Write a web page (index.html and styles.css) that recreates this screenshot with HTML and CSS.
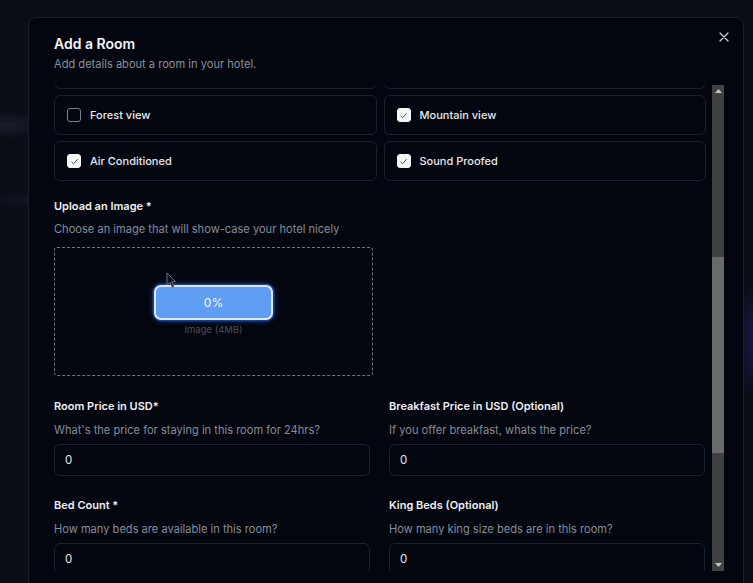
FILE: index.html
```html
<!DOCTYPE html>
<html lang="en">
<head>
<meta charset="utf-8">
<title>Add a Room</title>
<link rel="stylesheet" href="styles.css">
</head>
<body>
<div class="modal">
  <header class="head">
    <div class="head-text">
      <h2 class="title">Add a Room</h2>
      <p class="subtitle">Add details about a room in your hotel.</p>
    </div>
    <button class="close" aria-label="Close">
      <svg width="10" height="10" viewBox="0 0 10 10"><path d="M1 1L9 9M9 1L1 9" stroke="#c9cdd4" stroke-width="1.3" stroke-linecap="round"/></svg>
    </button>
  </header>
  <div class="scroll">
    <div class="scroll-content">
      <div class="amenities">
        <div class="card"></div>
        <div class="card"></div>
        <label class="card"><span class="box"></span><span class="card-label">Forest view</span></label>
        <label class="card"><span class="box checked"><svg width="9" height="9" viewBox="0 0 9 9"><path d="M1.5 4.8L3.6 6.8L7.6 2.2" fill="none" stroke="#4b5563" stroke-width="1"/></svg></span><span class="card-label">Mountain view</span></label>
        <label class="card"><span class="box checked"><svg width="9" height="9" viewBox="0 0 9 9"><path d="M1.5 4.8L3.6 6.8L7.6 2.2" fill="none" stroke="#4b5563" stroke-width="1"/></svg></span><span class="card-label">Air Conditioned</span></label>
        <label class="card"><span class="box checked"><svg width="9" height="9" viewBox="0 0 9 9"><path d="M1.5 4.8L3.6 6.8L7.6 2.2" fill="none" stroke="#4b5563" stroke-width="1"/></svg></span><span class="card-label">Sound Proofed</span></label>
      </div>

      <section class="upload">
        <div class="label">Upload an Image *</div>
        <div class="desc desc-upload">Choose an image that will show-case your hotel nicely</div>
        <div class="dropzone">
          <svg class="cursor" width="11" height="17" viewBox="0 0 11 17"><path d="M1 1L1 13L4 10.3L6.2 15.2L7.8 14.5L5.7 9.7L9.6 9.7Z" fill="#0b0f19" stroke="#6b7280" stroke-width="1" stroke-linejoin="round"/></svg>
          <div class="progress">0%</div>
          <div class="caption">Image (4MB)</div>
        </div>
      </section>

      <div class="fields">
        <div class="field">
          <div class="label">Room Price in USD*</div>
          <div class="desc">What's the price for staying in this room for 24hrs?</div>
          <div class="input">0</div>
        </div>
        <div class="field">
          <div class="label">Breakfast Price in USD (Optional)</div>
          <div class="desc">If you offer breakfast, whats the price?</div>
          <div class="input">0</div>
        </div>
        <div class="field">
          <div class="label">Bed Count *</div>
          <div class="desc">How many beds are available in this room?</div>
          <div class="input">0</div>
        </div>
        <div class="field">
          <div class="label">King Beds (Optional)</div>
          <div class="desc">How many king size beds are in this room?</div>
          <div class="input">0</div>
        </div>
      </div>
    </div>
    <div class="scrollbar">
      <div class="arrow"><svg width="7" height="4" viewBox="0 0 7 4"><path d="M0 4L3.5 0L7 4Z" fill="#c4c4c4"/></svg></div>
      <div class="track"><div class="thumb"></div></div>
      <div class="arrow"><svg width="7" height="4" viewBox="0 0 7 4"><path d="M0 0L3.5 4L7 0Z" fill="#c4c4c4"/></svg></div>
    </div>
  </div>
</div>
</body>
</html>
```

FILE: styles.css
```css
* { box-sizing: border-box; }

html, body {
  margin: 0;
  height: 100%;
  overflow: hidden;
}

body {
  font-family: Inter, "Liberation Sans", sans-serif;
  background:
    radial-gradient(ellipse 30px 60px at 760px 340px, rgba(28, 30, 90, 0.8), transparent),
    radial-gradient(ellipse 40px 14px at 10px 125px, rgba(40, 46, 60, 0.5), transparent),
    radial-gradient(ellipse 40px 10px at 30px 200px, rgba(30, 36, 50, 0.4), transparent),
    #0a0d16;
  padding: 17px 0 0 28px;
}

.modal {
  width: 716px;
  height: 620px;
  background: #03060f;
  border: 1px solid #1a1f2b;
  border-radius: 8px;
  padding: 16px 19px 0 25px;
}

.head {
  display: flex;
  justify-content: space-between;
  align-items: flex-start;
}

.title {
  margin: 0;
  font-size: 14px;
  line-height: 20px;
  font-weight: 600;
  color: #f3f4f6;
}

.subtitle {
  margin: 2px 0 0;
  font-size: 11.1px;
  line-height: 16px;
  color: #8a909b;
}

.close {
  background: none;
  border: 0;
  padding: 0;
  width: 10px;
  height: 10px;
  margin: -2px -5px 0 0;
  display: flex;
  cursor: pointer;
}

.scroll {
  margin-top: 13px;
  height: 486px;
  display: flex;
  gap: 6px;
  overflow: hidden;
}

.scroll-content {
  flex: 1;
  min-width: 0;
}

.amenities {
  margin-top: -36px;
  display: grid;
  grid-template-columns: 1fr 1fr;
  gap: 6px 7px;
}

.card {
  height: 40px;
  border: 1px solid #1b2130;
  border-radius: 6px;
  display: flex;
  align-items: center;
  padding-left: 12px;
}

.box {
  width: 14px;
  height: 14px;
  border: 1.5px solid #7c828d;
  border-radius: 3px;
  display: flex;
  align-items: center;
  justify-content: center;
  flex-shrink: 0;
}

.box.checked {
  background: #f5f6f8;
  border-color: #f5f6f8;
}

.card-label {
  margin-left: 9px;
  font-size: 11px;
  font-weight: 500;
  color: #e7e9ed;
}

.upload {
  margin-top: 17px;
}

.label {
  font-size: 11px;
  line-height: 16px;
  font-weight: 600;
  color: #eef0f3;
}

.desc {
  margin-top: 8px;
  font-size: 11.1px;
  line-height: 16px;
  color: #858c97;
}

.desc-upload {
  margin-top: 7px;
}

.dropzone {
  position: relative;
  margin-top: 10px;
  width: 319px;
  height: 129px;
  border: 1px dashed #707683;
  border-radius: 3px;
  display: flex;
  flex-direction: column;
  align-items: center;
  justify-content: center;
  padding-bottom: 2px;
}

.cursor {
  position: absolute;
  left: 111px;
  top: 24px;
}

.progress {
  width: 119px;
  height: 35px;
  border-radius: 7px;
  background: #5f9ef3;
  border: 2px solid #dbe8fd;
  box-shadow: 0 0 0 1.5px #1e3f8f, 0 0 6px rgba(59, 130, 246, 0.55);
  color: #f4f8ff;
  font-size: 12px;
  font-weight: 400;
  display: flex;
  align-items: center;
  justify-content: center;
}

.caption {
  margin-top: 3px;
  font-size: 9.5px;
  line-height: 14px;
  color: #4a505c;
}

.fields {
  margin-top: 22px;
  display: grid;
  grid-template-columns: 316px 316px;
  column-gap: 19px;
  row-gap: 21px;
}

.input {
  margin-top: 6px;
  height: 32px;
  border: 1px solid #1b2130;
  border-radius: 6px;
  background: #03060f;
  padding-left: 10px;
  display: flex;
  align-items: center;
  font-size: 11.5px;
  color: #e5e7eb;
}

.scrollbar {
  width: 12px;
  flex-shrink: 0;
  height: 486px;
  background: #414141;
  display: flex;
  flex-direction: column;
}

.arrow {
  height: 12px;
  display: flex;
  align-items: center;
  justify-content: center;
}

.track {
  flex: 1;
  padding-top: 160px;
}

.thumb {
  height: 196px;
  background: #6a6a6a;
}
```
